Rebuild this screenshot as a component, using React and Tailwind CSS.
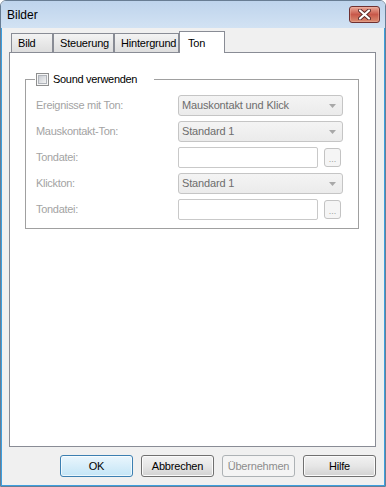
import React from "react";

const font = { fontFamily: '"Liberation Sans", Arial, sans-serif' };

function Tab({ label, width, active }) {
  if (active) {
    return (
      <div
        className={`relative z-10 -mb-[1px] flex h-[22px] items-start border border-b-0 border-[#898c95] bg-white pl-[8px] pt-[3px] text-[11px] tracking-[-0.2px] text-black ${width}`}
      >
        {label}
      </div>
    );
  }
  return (
    <div
      className={`flex h-[19px] items-center border border-b-0 border-[#898c95] bg-gradient-to-b from-[#f3f3f3] to-[#dedede] pl-[6px] pt-[1px] text-[11px] tracking-[-0.2px] text-black ${width}`}
    >
      {label}
    </div>
  );
}

function Combo({ value }) {
  return (
    <div className="flex h-[21px] w-[165px] items-center justify-between rounded-[3px] border border-[#c5c5c5] bg-gradient-to-b from-[#f4f4f4] to-[#ebebeb] pl-[3px] pr-[6px] text-[11px] tracking-[-0.15px] text-[#6d6d6d]">
      <span>{value}</span>
      <svg width="7" height="4" viewBox="0 0 7 4">
        <path d="M0 0 H7 L3.5 4 Z" fill="#a8a8a8" />
      </svg>
    </div>
  );
}

function FileInput() {
  return (
    <div className="flex items-center">
      <div className="h-[21px] w-[140px] rounded-[2px] border border-[#c9c9c9] bg-white" />
      <div className="ml-[6px] flex h-[19px] w-[17px] items-end justify-center rounded-[3px] border border-[#c3c3c3] bg-[#f5f5f5] pb-[2px] text-[9px] leading-[9px] text-[#a0a0a0]">
        ...
      </div>
    </div>
  );
}

function Row({ label, children }) {
  return (
    <div className="flex h-[21px] items-center">
      <div className="w-[142px] text-[11px] tracking-[-0.3px] text-[#a3a3a3]">{label}</div>
      {children}
    </div>
  );
}

function Button({ label, kind }) {
  const base =
    "flex h-[22px] w-[73px] items-center justify-center rounded-[3px] border text-[11px] tracking-[-0.2px]";
  if (kind === "default") {
    return (
      <div className={`${base} border-[#3c7fb1] bg-gradient-to-b from-[#eaf6fd] to-[#c4e5f6] text-black shadow-[inset_0_0_0_1px_#ffffffaa]`}>
        {label}
      </div>
    );
  }
  if (kind === "disabled") {
    return (
      <div className={`${base} border-[#adb2b5] bg-[#f4f4f4] text-[#8d8d8d]`}>{label}</div>
    );
  }
  return (
    <div className={`${base} border-[#707070] bg-gradient-to-b from-[#f2f2f2] via-[#e6e6e6] to-[#d2d2d2] text-black shadow-[inset_0_0_0_1px_#fbfbfb]`}>
      {label}
    </div>
  );
}

export default function App() {
  return (
    <div style={font} className="h-[487px] w-[386px]">
      <div className="flex h-full flex-col overflow-hidden rounded-t-[6px] border border-[#687d93]">
        {/* title bar */}
        <div className="flex h-[27px] items-center justify-between bg-gradient-to-b from-[#bed4ec] to-[#d2e2f3] pl-[6px] pr-[5px]">
          <span className="text-[12px] text-black">Bilder</span>
          <div className="flex h-[17px] w-[31px] items-center justify-center rounded-[3px] border border-[#6f3030] bg-gradient-to-b from-[#e9a899] via-[#c8584a] to-[#d98c72] shadow-[inset_0_0_0_1px_#f0b8a866]">
            <svg width="13" height="11" viewBox="0 0 13 11">
              <path d="M2 1.5 L11 9.5 M11 1.5 L2 9.5" stroke="#5a2a2a" strokeWidth="4" strokeLinecap="round" />
              <path d="M2 1.5 L11 9.5 M11 1.5 L2 9.5" stroke="#ffffff" strokeWidth="2.2" strokeLinecap="round" />
            </svg>
          </div>
        </div>

        {/* body */}
        <div className="flex flex-1 flex-col border-x border-b border-[#3c9fdf] bg-[#f0f0f0] pl-[7px] pr-[8px] pt-[3px]">
          <div className="ml-[2px] flex h-[21px] items-end">
            <Tab label="Bild" width="w-[42px]" />
            <Tab label="Steuerung" width="w-[61px]" />
            <Tab label="Hintergrund" width="w-[65px]" />
            <Tab label="Ton" width="w-[46px]" active />
          </div>

          <div className="h-[395px] border border-[#898c95] bg-white">
            <fieldset className="ml-[15px] mt-[18px] w-[334px] border border-[#a0a0a0] pb-[8px] pl-[10px] pt-[8px]">
              <legend className="-ml-[1px] flex h-[16px] items-center pl-[1px] pr-[17px]">
                <div className="flex h-[13px] w-[13px] items-center justify-center border border-[#8e8f8f] bg-[#f6f6f6]">
                  <div className="h-[9px] w-[9px] border border-[#b0b4ba] bg-gradient-to-br from-[#c9cdd3] to-[#f3f3f3]" />
                </div>
                <span className="ml-[4px] text-[11px] tracking-[-0.3px] text-black">Sound verwenden</span>
              </legend>
              <div className="flex flex-col gap-[5px]">
                <Row label="Ereignisse mit Ton:">
                  <Combo value="Mauskontakt und Klick" />
                </Row>
                <Row label="Mauskontakt-Ton:">
                  <Combo value="Standard 1" />
                </Row>
                <Row label="Tondatei:">
                  <FileInput />
                </Row>
                <Row label="Klickton:">
                  <Combo value="Standard 1" />
                </Row>
                <Row label="Tondatei:">
                  <FileInput />
                </Row>
              </div>
            </fieldset>
          </div>

          <div className="mt-[8px] flex justify-end gap-[8px]">
            <Button label="OK" kind="default" />
            <Button label="Abbrechen" />
            <Button label="Übernehmen" kind="disabled" />
            <Button label="Hilfe" />
          </div>
        </div>
      </div>
    </div>
  );
}
